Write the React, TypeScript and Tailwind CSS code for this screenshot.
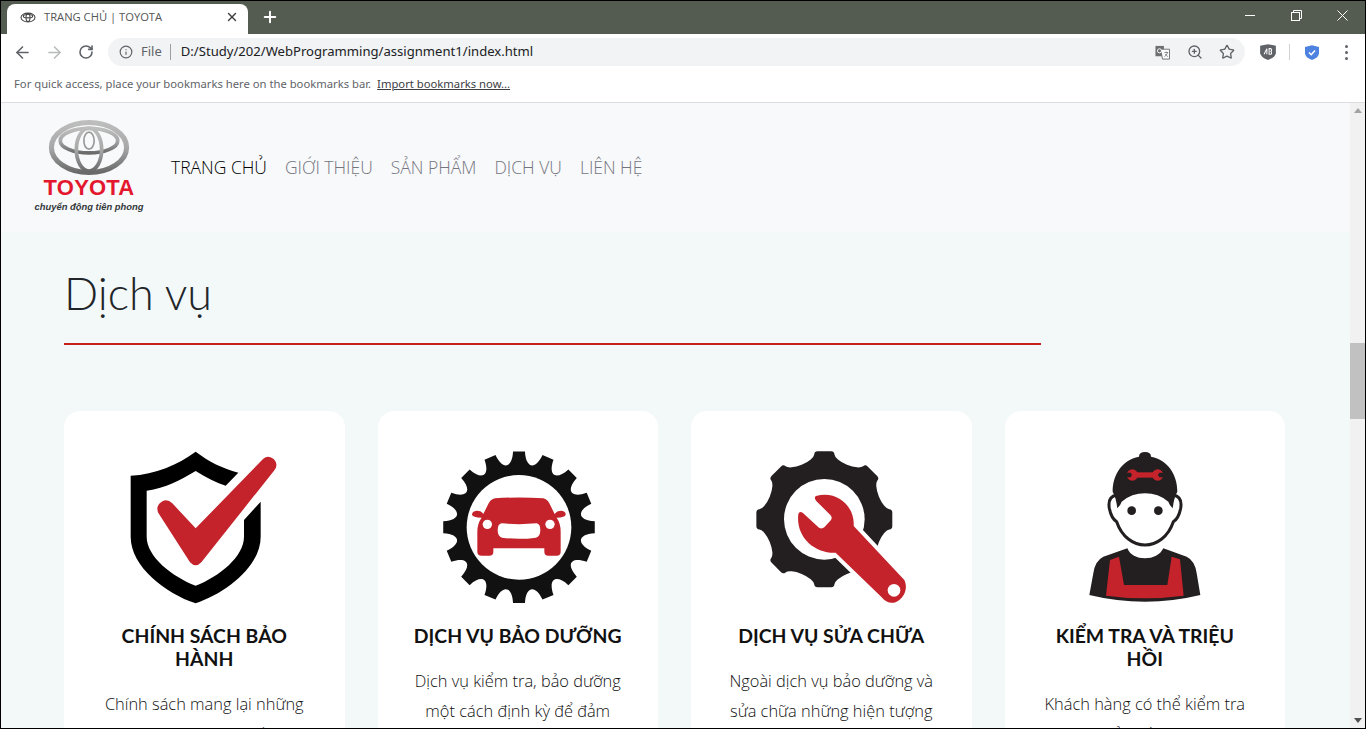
import { ArrowLeft, ArrowRight, RotateCw, Info, ZoomIn, Star, Plus, X } from 'lucide-react';

const RED = '#c4232b';
const DARK = '#231f20';

// Build a gear outline: tips on the outer radius, scooped valleys between them
const gearPath = (cx: number, cy: number, teeth: number, outer: number, valley: number, tipDeg: number): string => {
  const pt = (r: number, deg: number) => {
    const a = ((deg - 90) * Math.PI) / 180;
    return `${(cx + r * Math.cos(a)).toFixed(1)} ${(cy + r * Math.sin(a)).toFixed(1)}`;
  };
  const step = 360 / teeth;
  let d = '';
  for (let i = 0; i < teeth; i++) {
    const c = i * step;
    d += `${i === 0 ? 'M' : 'L'}${pt(outer, c - tipDeg)} L${pt(outer, c + tipDeg)} `;
    d += `C${pt(valley, c + tipDeg + 2)} ${pt(valley, c + step - tipDeg - 2)} ${pt(outer, c + step - tipDeg)} `;
  }
  return d + 'Z';
};

const ToyotaMark = ({ className }: { className: string }) => (
  <svg viewBox="0 0 240 160" className={className} fill="none">
    <defs>
      <linearGradient id="chrome" x1="0" y1="0" x2="0" y2="1">
        <stop offset="0" stopColor="#bdbdbd" />
        <stop offset="0.5" stopColor="#a8a8a8" />
        <stop offset="1" stopColor="#6a6a6a" />
      </linearGradient>
    </defs>
    <ellipse cx="120" cy="80" rx="110" ry="73" stroke="url(#chrome)" strokeWidth="15" />
    <ellipse cx="120" cy="60" rx="84" ry="36" stroke="url(#chrome)" strokeWidth="11" />
    <ellipse cx="120" cy="86" rx="37" ry="63" stroke="url(#chrome)" strokeWidth="11" />
    <ellipse cx="120" cy="60" rx="15" ry="25" stroke="#9a9a9a" strokeWidth="5" />
  </svg>
);

const ShieldIcon = () => (
  <svg viewBox="0 0 570 525" className="w-[190px] h-[175px]">
    <path
      d="M260 35C205 75 140 103 65 107V290C65 380 170 460 260 490C350 460 455 380 455 290V185L405 240V290C405 350 330 410 260 437C190 410 113 350 113 290V152C170 145 215 120 260 93C290 112 320 128 350 137L388 98C340 85 300 65 260 35Z"
      fill="#000"
    />
    <path
      d="M150 192Q170 170 190 190L260 265L462 57Q478 43 495 58Q510 75 495 92L277 367Q260 385 243 367L150 222Q140 207 150 192Z"
      fill={RED}
    />
  </svg>
);

const CarGearIcon = () => (
  <svg viewBox="-6 0 540 525" className="w-[180px] h-[175px]">
    <path d={gearPath(267, 262, 16, 228, 178, 4.5)} fill="#111" />
    <circle cx="267" cy="262" r="157" fill="#fff" />
    <path
      d="M195 175Q267 170 340 175Q352 178 358 190L374 222Q380 212 395 212Q408 215 407 224Q405 232 380 233Q392 250 392 275V335Q392 347 380 347H355Q343 347 343 335V325H190V335Q190 347 178 347H155Q142 347 142 335V275Q142 250 155 233Q128 232 126 224Q126 214 140 212Q155 212 160 222L176 190Q182 178 195 175Z"
      fill={RED}
    />
    <circle cx="172" cy="253" r="14" fill="#fff" />
    <circle cx="360" cy="253" r="14" fill="#fff" />
    <path d="M215 250Q267 255 320 250Q331 252 331 270Q331 290 318 293Q267 300 216 293Q203 290 203 270Q203 252 215 250Z" fill="#fff" />
  </svg>
);

const WrenchGearIcon = () => (
  <svg viewBox="-3 0 525 525" className="w-[175px] h-[175px]">
    <path d={gearPath(238, 238, 8, 195, 166, 6)} fill={DARK} stroke={DARK} strokeWidth="20" strokeLinejoin="round" />
    <circle cx="238" cy="238" r="121" fill="#fff" />
    <path
      d="M213 168C275 150 330 198 326 258L478 420C490 445 478 475 452 487C435 492 420 485 410 472L272 338C205 340 152 288 160 222Q163 212 173 218L222 263Q230 268 238 262L258 240Q263 232 256 225L213 182Q206 172 213 168Z"
      fill={RED}
      stroke="#fff"
      strokeWidth="24"
      paintOrder="stroke"
    />
    <circle cx="447" cy="451" r="19" fill="#fff" />
  </svg>
);

const WorkerIcon = () => (
  <svg viewBox="0 0 450 525" className="w-[150px] h-[175px]">
    <path
      d="M140 165Q112 170 118 205Q124 235 140 245C155 290 190 315 225 315C260 315 295 290 310 245Q326 235 332 205Q338 170 310 165"
      fill="#fff"
      stroke={DARK}
      strokeWidth="9"
    />
    <path
      d="M207 50Q207 36 225 36Q243 36 243 50C295 60 322 105 322 155Q312 172 308 205Q298 195 295 185Q265 160 225 160Q185 160 155 185Q152 195 142 205Q138 172 128 155C128 105 155 60 207 50Z"
      fill={DARK}
    />
    <rect x="187" y="97" width="76" height="16" fill={RED} />
    <circle cx="187" cy="105" r="17" fill={RED} />
    <circle cx="263" cy="105" r="17" fill={RED} />
    <path d="M166 98H182L186 105L182 112H166Z" fill={DARK} />
    <path d="M284 98H268L264 105L268 112H284Z" fill={DARK} />
    <circle cx="185" cy="212" r="13" fill={DARK} />
    <circle cx="265" cy="212" r="13" fill={DARK} />
    <path
      d="M172 325C180 345 200 355 225 355C250 355 270 345 280 325L350 350Q375 362 380 400L391 465Q310 485 225 485Q140 485 58 465L70 400Q75 362 100 350Z"
      fill={DARK}
    />
    <path d="M120 360L147 350L162 435H292L305 350L330 358L341 467Q280 475 225 475Q165 475 108 467Z" fill={RED} />
  </svg>
);

const Tab = () => (
  <div className="flex items-center w-[241px] h-[31px] mt-[3px] ml-[6px] pl-[13px] pr-[9px] pb-[5px] bg-white rounded-t-lg">
    <svg viewBox="0 0 24 16" className="w-[16px] h-[11px] shrink-0" fill="none" stroke="#444" strokeWidth="1.6">
      <ellipse cx="12" cy="8" rx="10.5" ry="6.6" />
      <ellipse cx="12" cy="6" rx="7" ry="2.6" />
      <ellipse cx="12" cy="8" rx="3" ry="6" />
    </svg>
    <span className="ml-[8px] text-[11.2px] text-[#555] font-['Open_Sans',sans-serif] whitespace-nowrap">TRANG CHỦ | TOYOTA</span>
    <X size={14} strokeWidth={2.4} className="ml-auto text-[#3c4043]" />
  </div>
);

const WindowButtons = () => (
  <div className="ml-auto flex items-center h-[28px] text-white">
    <div className="w-[46px] flex justify-center">
      <div className="w-[10px] h-px bg-white" />
    </div>
    <div className="w-[46px] flex justify-center">
      <svg viewBox="0 0 11 11" className="w-[11px] h-[11px]" fill="none" stroke="#fff">
        <rect x="0.5" y="2.5" width="8" height="8" />
        <path d="M2.5 2.5V.5H10.5V8.5H8.5" />
      </svg>
    </div>
    <div className="w-[46px] flex justify-center">
      <svg viewBox="0 0 11 11" className="w-[11px] h-[11px]" fill="none" stroke="#fff">
        <path d="M.5 .5L10.5 10.5M10.5 .5L.5 10.5" />
      </svg>
    </div>
  </div>
);

const Toolbar = () => (
  <div className="flex items-center h-[36px] bg-white pl-[12px]">
    <ArrowLeft size={19} strokeWidth={2} className="text-[#5f6368]" />
    <ArrowRight size={19} strokeWidth={2} className="ml-[13px] text-[#b8babc]" />
    <RotateCw size={16} strokeWidth={2.4} className="ml-[14px] text-[#5f6368]" />
    <div className="flex items-center ml-[14px] w-[1137px] h-[28px] rounded-full bg-[#f1f3f4] pl-[11px] pr-[10px]">
      <Info size={14} strokeWidth={2} className="text-[#5f6368]" />
      <span className="ml-[8px] text-[13px] text-[#5f6368] font-['Noto_Sans',sans-serif]">File</span>
      <div className="ml-[8px] w-px h-[16px] bg-[#9aa0a6]" />
      <span className="ml-[10px] text-[13.1px] text-[#202124] font-['Noto_Sans',sans-serif] whitespace-nowrap">D:/Study/202/WebProgramming/assignment1/index.html</span>
      <svg viewBox="0 0 16 16" className="ml-auto w-[15px] h-[15px]">
        <rect x="0.5" y="1" width="9" height="11" fill="#6b6f72" />
        <path d="M6 4.5H15.5V15H8Z" fill="#fff" stroke="#6b6f72" />
        <path d="M10 8H14M12 7V8M13.5 8Q12.5 11 10 12.5M10.8 9.5Q12 11.5 14 12.5" stroke="#6b6f72" fill="none" strokeWidth="0.8" />
        <circle cx="4.8" cy="6.2" r="2.2" fill="none" stroke="#fff" />
      </svg>
      <ZoomIn size={16} strokeWidth={2} className="ml-[17px] text-[#5f6368]" />
      <Star size={16} strokeWidth={2} className="ml-[16px] text-[#5f6368]" />
    </div>
    <svg viewBox="0 0 16 16" className="ml-[14px] w-[18px] h-[18px]">
      <path d="M1 2.5L8 1L15 2.5V9Q14 13 8 15Q2 13 1 9Z" fill="#5f6368" />
      <path d="M4.5 10L7 5V10M9 5V10H10.5Q12 9 10.5 7.5Q12 6 10.5 5Z" stroke="#fff" fill="none" strokeWidth="0.9" />
    </svg>
    <div className="ml-[12px] w-px h-[16px] bg-[#d0d2d4]" />
    <svg viewBox="0 0 16 16" className="ml-[14px] w-[16px] h-[17px]">
      <path d="M1 2.5L8 .8L15 2.5V9Q14 13.5 8 15.5Q2 13.5 1 9Z" fill="#4d82e0" />
      <path d="M5 8L7.2 10.2L11 6" stroke="#fff" fill="none" strokeWidth="1.5" />
    </svg>
    <div className="ml-[25px] flex flex-col gap-[3px]">
      <div className="w-[3px] h-[3px] rounded-full bg-[#5f6368]" />
      <div className="w-[3px] h-[3px] rounded-full bg-[#5f6368]" />
      <div className="w-[3px] h-[3px] rounded-full bg-[#5f6368]" />
    </div>
  </div>
);

const BookmarksBar = () => (
  <div className="flex items-center h-[33px] pl-[13px] pb-[3px] bg-white border-b border-[#dadce0] text-[11.25px] text-[#5f6368] font-['Noto_Sans',sans-serif] whitespace-nowrap">
    <span>For quick access, place your bookmarks here on the bookmarks bar.</span>
    <span className="ml-[6px] underline text-[#3c4043]">Import bookmarks now...</span>
  </div>
);

const navItems = ['TRANG CHỦ', 'GIỚI THIỆU', 'SẢN PHẨM', 'DỊCH VỤ', 'LIÊN HỆ'];

const Navbar = () => (
  <div className="flex items-center h-[129px] pl-[33px] bg-[#f8f9fa] shrink-0">
    <div className="flex flex-col items-center w-[110px] pb-[4px]">
      <ToyotaMark className="w-[82px] h-[57px]" />
      <div className="mt-[1px] text-[22px] leading-[22px] font-bold tracking-[0.2px] text-[#e3172d] font-['Liberation_Sans',sans-serif]">TOYOTA</div>
      <div className="mt-[1px] text-[9.4px] leading-[13px] font-bold italic text-[#33383a] whitespace-nowrap font-['Liberation_Sans',sans-serif]">chuyển động tiên phong</div>
    </div>
    <nav className="flex ml-[27px] gap-[18px] text-[17.5px] font-light font-['Open_Sans',sans-serif]">
      {navItems.map((item, i) => (
        <span key={item} className={i === 0 ? 'text-black' : 'text-[#757580]'}>
          {item}
        </span>
      ))}
    </nav>
  </div>
);

const cards = [
  {
    icon: <ShieldIcon />,
    title: ['CHÍNH SÁCH BẢO', 'HÀNH'],
    text: ['Chính sách mang lại những', 'ưu đãi cho khách hàng'],
  },
  {
    icon: <CarGearIcon />,
    title: ['DỊCH VỤ BẢO DƯỠNG'],
    text: ['Dịch vụ kiểm tra, bảo dưỡng', 'một cách định kỳ để đảm', 'bảo xe luôn vận hành tốt'],
  },
  {
    icon: <WrenchGearIcon />,
    title: ['DỊCH VỤ SỬA CHỮA'],
    text: ['Ngoài dịch vụ bảo dưỡng và', 'sửa chữa những hiện tượng', 'hư hỏng của xe'],
  },
  {
    icon: <WorkerIcon />,
    title: ['KIỂM TRA VÀ TRIỆU', 'HỒI'],
    text: ['Khách hàng có thể kiểm tra', 'xem xe của mình có thuộc'],
  },
];

const Card = ({ card }: { card: (typeof cards)[number] }) => (
  <div className="h-[400px] bg-white rounded-2xl pt-[29px] flex flex-col items-center text-center">
    {card.icon}
    <h3 className="mt-[9px] mb-[19px] text-[19.4px] leading-[23px] font-bold text-[#111] font-['Lato',sans-serif]">
      {card.title.map((line) => (
        <div key={line}>{line}</div>
      ))}
    </h3>
    <div className="text-[16.4px] leading-[30px] font-light text-[#111] font-['Open_Sans',sans-serif]">
      {card.text.map((line) => (
        <div key={line}>{line}</div>
      ))}
    </div>
  </div>
);

const Scrollbar = () => (
  <div className="flex flex-col items-center w-[15px] h-full bg-[#f1f1f1] shrink-0">
    <div className="mt-[5px] w-0 h-0 border-x-[4px] border-x-transparent border-b-[5px] border-b-[#a3a3a3]" />
    <div className="mt-[230px] w-full h-[76px] bg-[#c1c1c1]" />
    <div className="mt-auto mb-[5px] w-0 h-0 border-x-[4px] border-x-transparent border-t-[5px] border-t-[#505050]" />
  </div>
);

export default function App() {
  return (
    <div className="w-[1366px] h-[729px] overflow-hidden border border-black flex flex-col bg-white">
      <div className="flex items-start h-[33px] bg-[#545c52] shrink-0">
        <Tab />
        <Plus size={18} strokeWidth={2.6} className="ml-[13px] mt-[7px] text-white" />
        <WindowButtons />
      </div>
      <Toolbar />
      <BookmarksBar />
      <div className="flex flex-1 min-h-0">
        <div className="flex-1 min-w-0 overflow-hidden bg-[#f3f8f8]">
          <Navbar />
          <section className="pl-[63px] pr-[65px]">
            <h1 className="pt-[30px] h-[111px] text-[45px] leading-[62px] font-light text-[#212529] font-['Lato',sans-serif]">
              Dịch vụ
            </h1>
            <div className="w-[977px] h-[2px] bg-[#c8201c]" />
            <div className="grid grid-cols-4 gap-[33px] mt-[66px]">
              {cards.map((card) => (
                <Card key={card.title[0]} card={card} />
              ))}
            </div>
          </section>
        </div>
        <Scrollbar />
      </div>
    </div>
  );
}
